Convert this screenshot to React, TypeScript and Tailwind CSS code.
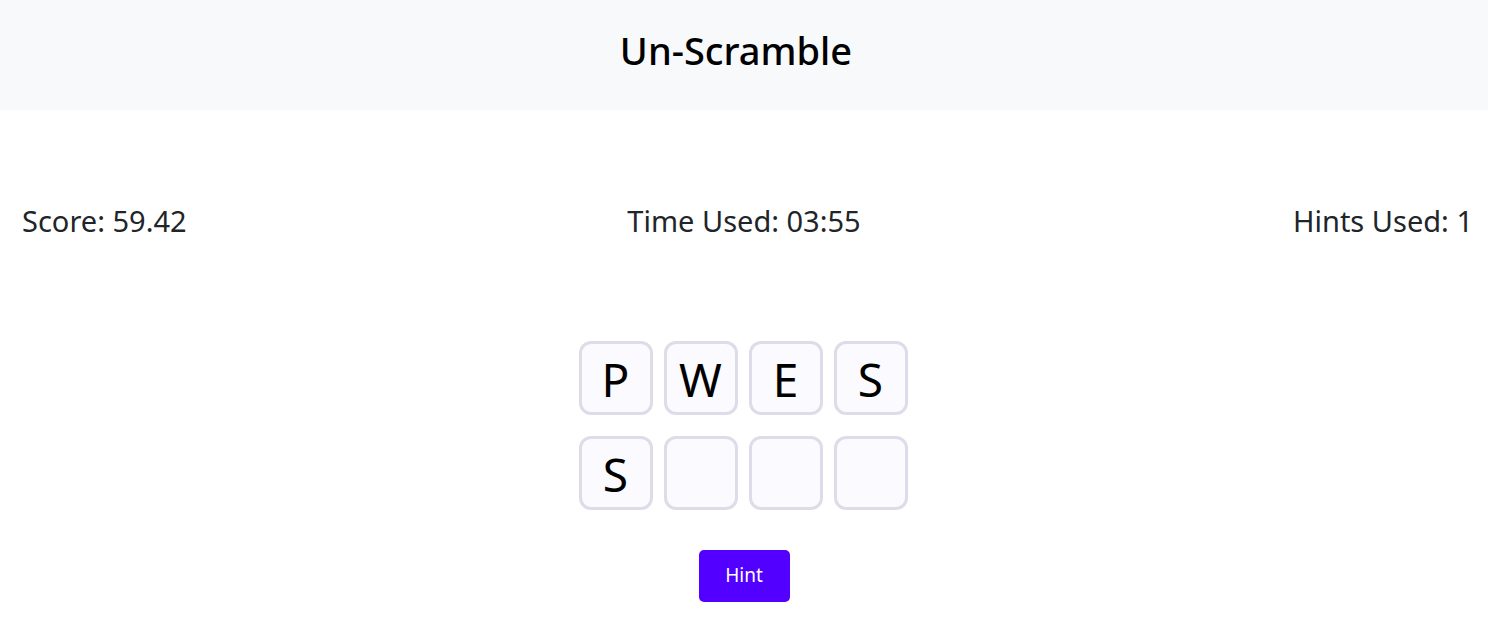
import React from 'react';

const tiles: string[] = ['P', 'W', 'E', 'S', 'S', '', '', ''];

const Tile: React.FC<{ letter: string }> = ({ letter }) => (
    <div className="w-[74px] h-[74px] flex items-center justify-center rounded-xl border-[3px] border-[#dedce8] bg-[#fafaff] text-[46px] text-black leading-none pt-[3px]">
        {letter}
    </div>
);

const App: React.FC = () => {
    return (
        <div className="min-h-screen bg-white font-['Noto_Sans',sans-serif] text-[#212529]">
            <header className="h-[110px] bg-[#f8f9fa] flex items-center justify-center pb-[10px] pr-[16px]">
                <h1 className="text-[38px] font-medium text-black">Un-Scramble</h1>
            </header>

            <div className="grid grid-cols-3 items-center pl-[22px] pr-[15px] mt-[89px] text-[29px]">
                <span>Score: 59.42</span>
                <span className="text-center pr-[7px]">Time Used: 03:55</span>
                <span className="text-right">Hints Used: 1</span>
            </div>

            <div className="flex flex-col items-center mt-[98px]">
                <div className="grid grid-cols-4 gap-x-[11px] gap-y-[21px] -ml-[2px]">
                    {tiles.map((t, i) => <Tile key={i} letter={t} />)}
                </div>
                <button className="mt-[40px] w-[91px] h-[52px] rounded-[5px] bg-[#5200ff] text-white text-[19px]">
                    Hint
                </button>
            </div>
        </div>
    );
};

export default App;
